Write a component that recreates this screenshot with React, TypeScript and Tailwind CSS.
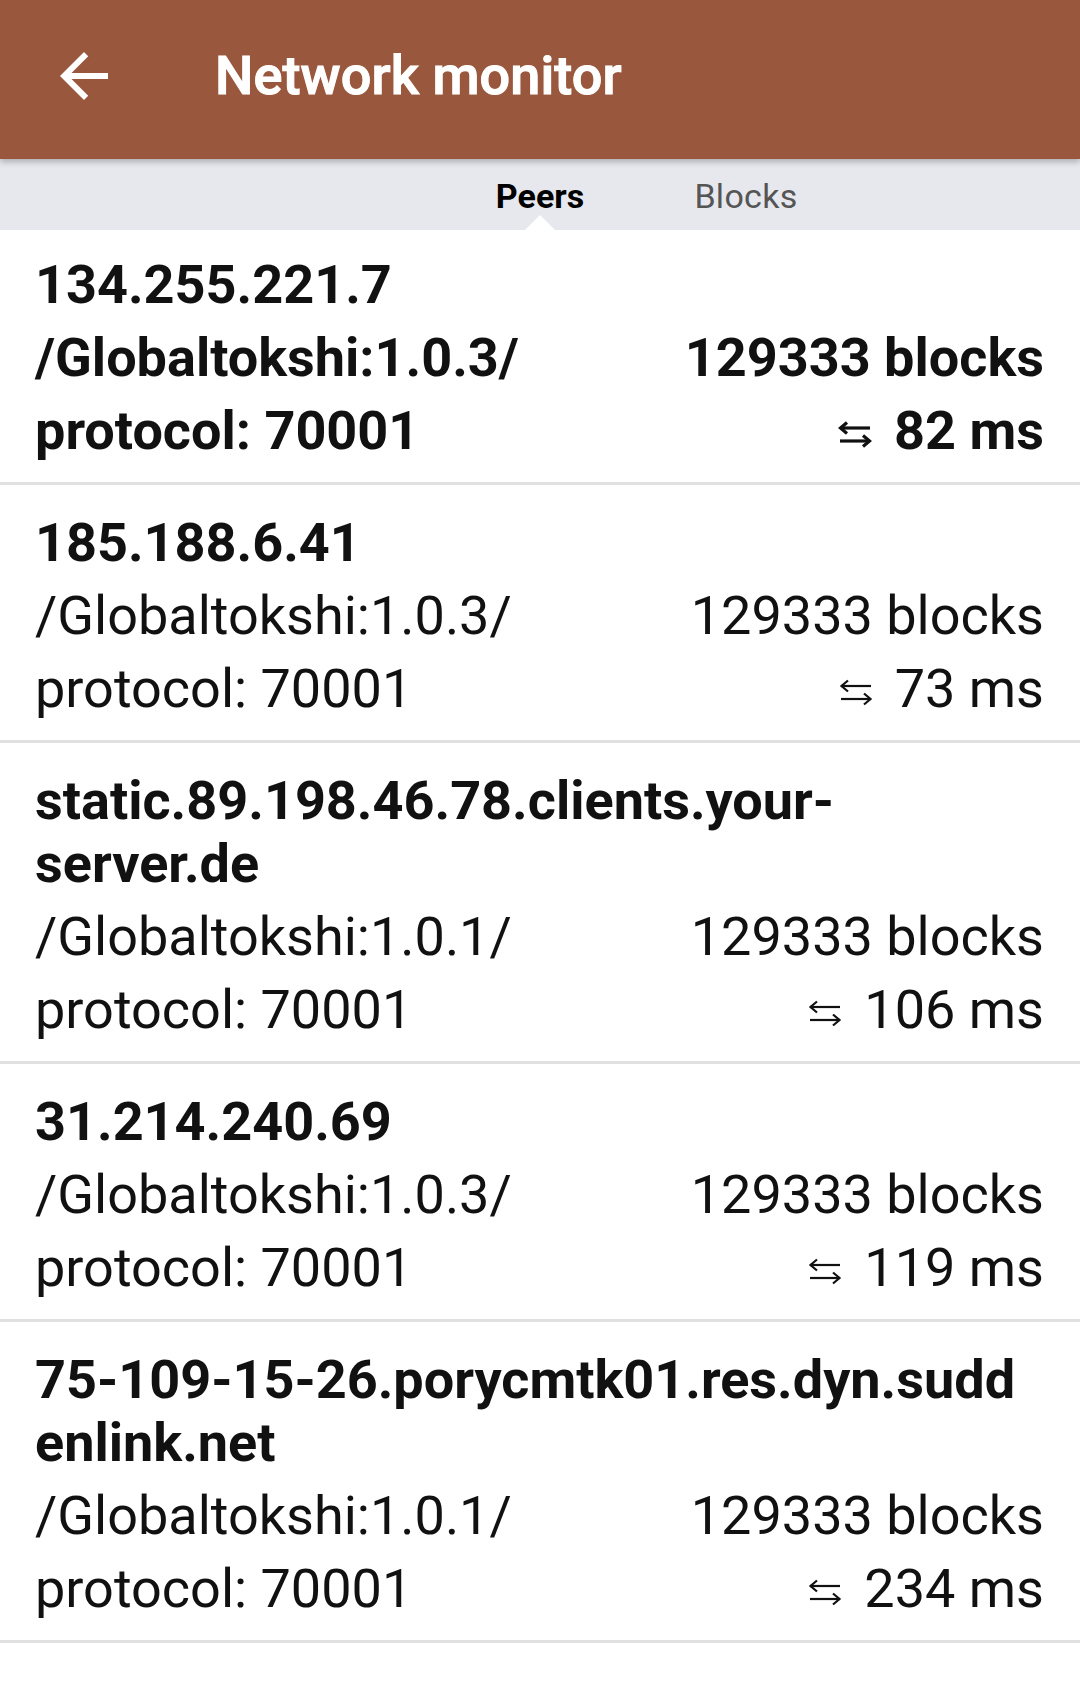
import React from "react";

type Peer = {
  host: string[];
  version: string;
  protocol: string;
  blocks: string;
  ping: string;
  bold?: boolean;
};

const peers: Peer[] = [
  { host: ["134.255.221.7"], version: "/Globaltokshi:1.0.3/", protocol: "protocol: 70001", blocks: "129333 blocks", ping: "82 ms", bold: true },
  { host: ["185.188.6.41"], version: "/Globaltokshi:1.0.3/", protocol: "protocol: 70001", blocks: "129333 blocks", ping: "73 ms" },
  { host: ["static.89.198.46.78.clients.your-", "server.de"], version: "/Globaltokshi:1.0.1/", protocol: "protocol: 70001", blocks: "129333 blocks", ping: "106 ms" },
  { host: ["31.214.240.69"], version: "/Globaltokshi:1.0.3/", protocol: "protocol: 70001", blocks: "129333 blocks", ping: "119 ms" },
  { host: ["75-109-15-26.porycmtk01.res.dyn.sudd", "enlink.net"], version: "/Globaltokshi:1.0.1/", protocol: "protocol: 70001", blocks: "129333 blocks", ping: "234 ms" },
];

function PingIcon({ bold }: { bold?: boolean }) {
  const sw = bold ? 3.2 : 2.2;
  return (
    <svg width="34" height="28" viewBox="0 0 34 28" fill="none" stroke="currentColor" strokeWidth={sw} strokeLinecap="butt" strokeLinejoin="miter">
      <path d="M2 8 H32" />
      <path d="M9 2.5 L2.5 8 L9 13.5" />
      <path d="M2 21 H32" />
      <path d="M25 15.5 L31.5 21 L25 26.5" />
    </svg>
  );
}

export default function App() {
  return (
    <div className="w-[1080px] min-h-[1693px] bg-white text-[#111]" style={{ fontFamily: "Roboto, 'Liberation Sans', sans-serif" }}>
      <header className="relative z-10 h-[159px] bg-[#99573d] flex items-center pb-[8px] shadow-[0_3px_6px_rgba(0,0,0,0.25)]">
        <div className="w-[72px] h-[72px] ml-[48px] flex items-center justify-center">
          <svg width="72" height="72" viewBox="0 0 24 24" fill="white">
            <path d="M20 11H7.83l5.59-5.59L12 4l-8 8 8 8 1.41-1.41L7.83 13H20v-2z" />
          </svg>
        </div>
        <h1 className="ml-[95px] text-white text-[54px] font-medium leading-none tracking-[0.1px] [-webkit-text-stroke:1.1px_white]">Network monitor</h1>
      </header>

      <nav className="relative h-[71px] bg-[#e7e8ee] flex items-center pl-[437px] pt-[4px]">
        <div className="relative w-[206px] h-full flex items-center justify-center text-[34px] font-bold text-black">
          Peers
          <div className="absolute bottom-0 left-1/2 -translate-x-1/2 w-0 h-0 border-l-[15px] border-r-[15px] border-b-[15px] border-l-transparent border-r-transparent border-b-white" />
        </div>
        <div className="w-[206px] h-full flex items-center justify-center text-[34px] tracking-[0.3px] text-[#555]">Blocks</div>
      </nav>

      <main>
        {peers.map((p, i) => (
          <div key={i} className="border-b-[3px] border-[#e0e0e0]">
            <div className={`${i === 0 ? "pt-[23px]" : "pt-[26px]"} pb-[20px] pl-[35px] pr-[36px] flex flex-col gap-[10px] text-[54px] leading-[63px]`}>
              <div className="font-bold">
                {p.host.map((h, j) => (
                  <div key={j}>{h}</div>
                ))}
              </div>
              <div className={`flex justify-between ${p.bold ? "font-bold" : "font-normal"}`}>
                <div className="flex flex-col gap-[10px]">
                  <div>{p.version}</div>
                  <div>{p.protocol}</div>
                </div>
                <div className="flex flex-col gap-[10px] items-end">
                  <div>{p.blocks}</div>
                  <div className="flex items-center gap-[22px]">
                    <span className="mt-[6px]"><PingIcon bold={p.bold} /></span>
                    <span>{p.ping}</span>
                  </div>
                </div>
              </div>
            </div>
          </div>
        ))}
      </main>
    </div>
  );
}
